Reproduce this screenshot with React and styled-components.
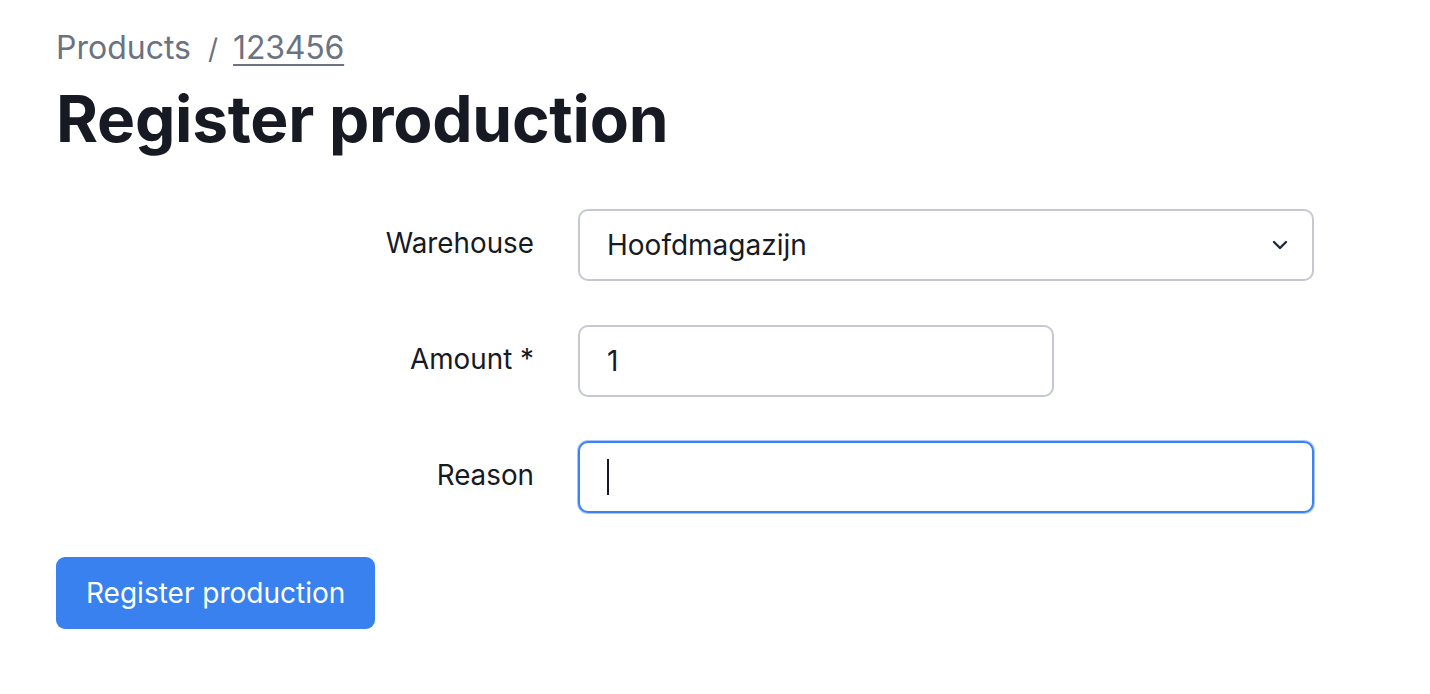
import React from "react";
import styled, { createGlobalStyle } from "styled-components";

const Global = createGlobalStyle`
  html, body { margin: 0; padding: 0; background: #ffffff; }
  body { font-family: Inter, "Noto Sans", sans-serif; color: #171a23; }
  * { box-sizing: border-box; }
`;

const Page = styled.div`
  padding: 28px 56px 40px 56px;
  width: 1314px;
`;

const Breadcrumb = styled.nav`
  display: flex;
  align-items: baseline;
  gap: 17px;
  font-size: 32px;
  line-height: 40px;
  color: #6b7280;
`;

const Crumb = styled.span`
  color: #6b7280;
  font-size: ${(p) => (p.$sep ? "28px" : "inherit")};
  margin-right: ${(p) => (p.$sep ? "-2px" : "0")};
`;

const CrumbLink = styled.a`
  color: #6b7280;
  text-decoration: underline;
  text-underline-offset: 5px;
  text-decoration-thickness: 2px;
  letter-spacing: -0.2px;
`;

const Title = styled.h1`
  margin: 12px 0 52px 0;
  font-size: 64px;
  line-height: 76px;
  font-weight: 700;
  color: #171a23;
  letter-spacing: -0.25px;
`;

const Form = styled.form`
  display: grid;
  grid-template-columns: 478px 736px;
  column-gap: 44px;
  row-gap: 44px;
  align-items: center;
`;

const Label = styled.label`
  text-align: right;
  font-size: 27.8px;
  line-height: 34px;
  color: #171a23;
  margin-top: -4px;
`;

const FieldBox = styled.div`
  position: relative;
  width: ${(p) => p.$width || "100%"};
`;

const Control = styled.input`
  display: block;
  width: 100%;
  height: 72px;
  border: 2px solid ${(p) => (p.$focus ? "#3b82f6" : "#c5c8d0")};
  border-radius: 10px;
  padding: 0 27px;
  font-family: Inter, "Noto Sans", sans-serif;
  font-size: 28px;
  color: #171a23;
  background: #fff;
  outline: none;
  box-shadow: ${(p) => (p.$focus ? "0 0 0 1px rgba(59,130,246,0.45)" : "none")};
`;

const SelectBox = styled.div`
  height: 72px;
  border: 2px solid #c5c8d0;
  border-radius: 10px;
  padding: 0 24px 0 27px;
  display: flex;
  align-items: center;
  justify-content: space-between;
  font-size: 28px;
  color: #171a23;
`;

const Caret = styled.span`
  position: absolute;
  left: 29px;
  top: 18px;
  width: 2px;
  height: 36px;
  background: #171a23;
`;

const Actions = styled.div`
  margin-top: 44px;
`;

const Button = styled.button`
  height: 72px;
  padding: 0 30px;
  border: none;
  border-radius: 9px;
  background: #3881ee;
  color: #fff;
  font-family: Inter, "Noto Sans", sans-serif;
  font-size: 28px;
  cursor: pointer;
`;

const Chevron = () => (
  <svg width="16" height="10" viewBox="0 0 16 10" fill="none">
    <path d="M2 2l6 6 6-6" stroke="#1e2a44" strokeWidth="2.4" strokeLinecap="round" strokeLinejoin="round" />
  </svg>
);

export default function App() {
  return (
    <>
      <Global />
      <Page>
        <Breadcrumb>
          <Crumb>Products</Crumb>
          <Crumb $sep>/</Crumb>
          <CrumbLink href="#">123456</CrumbLink>
        </Breadcrumb>
        <Title>Register production</Title>
        <Form onSubmit={(e) => e.preventDefault()}>
          <Label>Warehouse</Label>
          <FieldBox>
            <SelectBox>
              <span>Hoofdmagazijn</span>
              <Chevron />
            </SelectBox>
          </FieldBox>
          <Label>Amount *</Label>
          <FieldBox $width="476px">
            <Control defaultValue="1" readOnly />
          </FieldBox>
          <Label>Reason</Label>
          <FieldBox>
            <Control $focus readOnly defaultValue="" />
            <Caret />
          </FieldBox>
        </Form>
        <Actions>
          <Button type="button">Register production</Button>
        </Actions>
      </Page>
    </>
  );
}
